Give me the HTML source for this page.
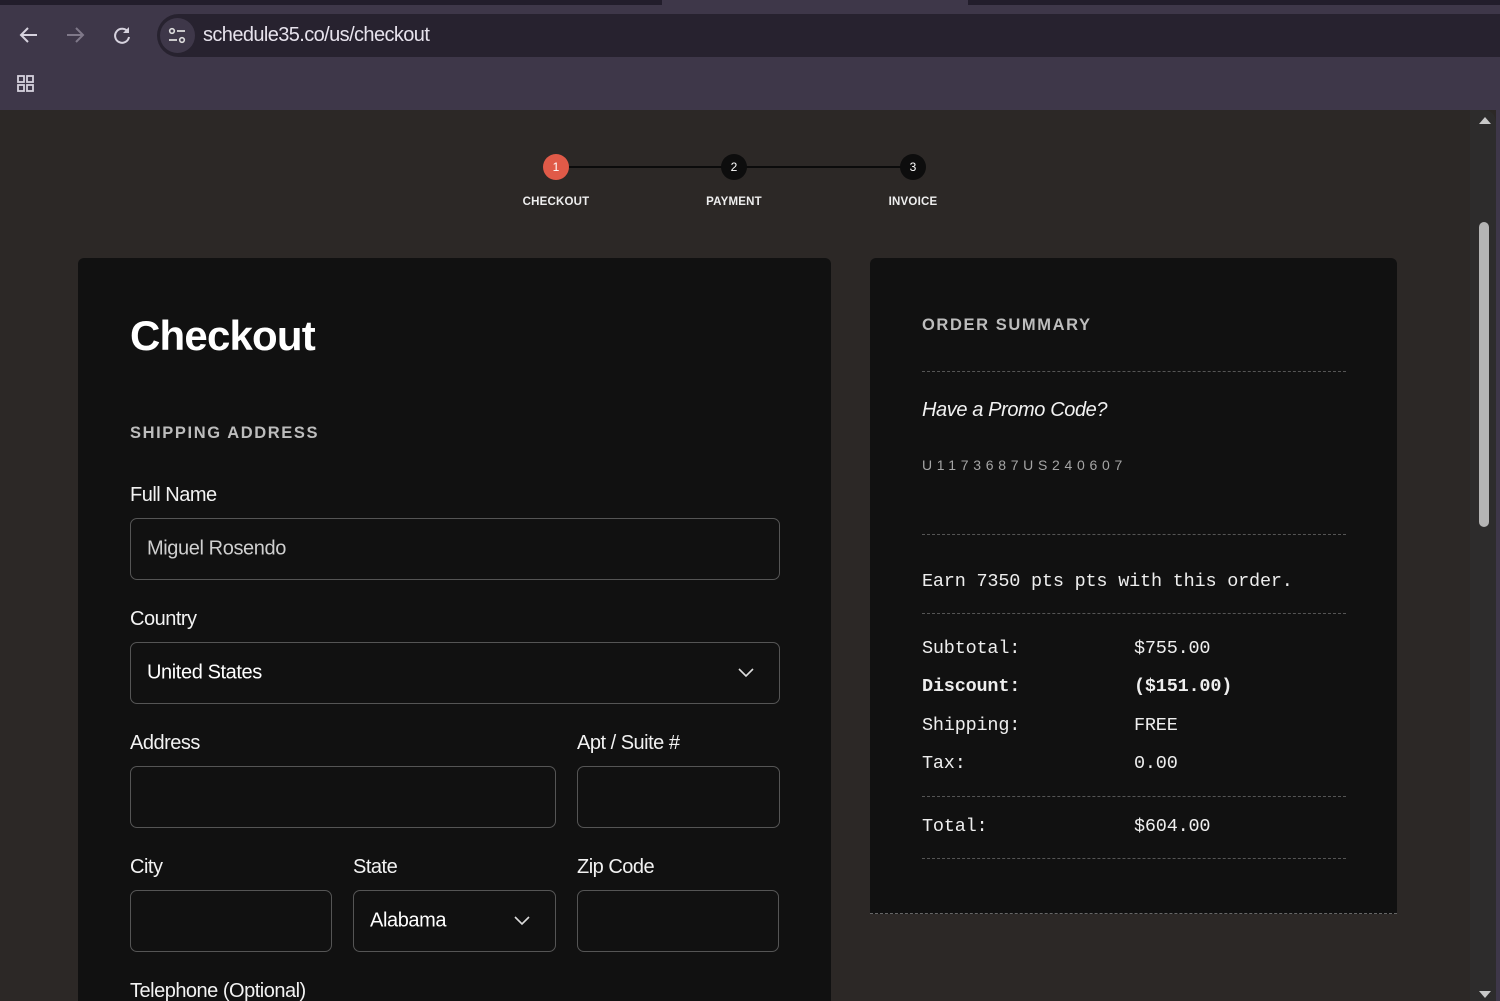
<!DOCTYPE html>
<html><head><meta charset="utf-8">
<style>
*{margin:0;padding:0;box-sizing:border-box}
html,body{width:1500px;height:1001px;overflow:hidden;background:#2c2826;font-family:"Liberation Sans",sans-serif;color:#fff;position:relative}
.abs{position:absolute}
.lbl{position:absolute;font-size:20px;color:#f2f2f2;letter-spacing:-0.5px;line-height:24px}
.inp{position:absolute;border:1.5px solid #555;border-radius:7px;background:#111}
.inp span{position:absolute;left:16px;top:50%;transform:translateY(-50%);font-size:20px;letter-spacing:-0.4px}
.chev{position:absolute;top:50%;transform:translateY(-50%)}
.dash{position:absolute;left:922px;width:424px;border-top:1px dashed #555}
.mono{font-family:"Liberation Mono",monospace;font-size:18.5px;letter-spacing:-0.2px;color:#eee;position:absolute}
</style></head><body>
<div class="abs" style="left:0;top:0;width:1500px;height:110px;background:#3e3749"></div>
<div class="abs" style="left:0;top:0;width:1500px;height:5px;background:#221d2b"></div>
<div class="abs" style="left:662px;top:0;width:306px;height:6px;background:#3e3749"></div>
<div class="abs" style="left:157px;top:14px;width:1343px;height:43px;background:#27222f;border-radius:22px 0 0 22px"></div>
<div class="abs" style="left:160px;top:18px;width:35px;height:35px;background:#3e3749;border-radius:50%"></div>
<svg class="abs" style="left:18px;top:24px" width="22" height="22" viewBox="0 0 22 22"><path d="M19 11H4M10 4L3 11l7 7" stroke="#d6d2de" stroke-width="2" fill="none"/></svg>
<svg class="abs" style="left:64px;top:24px" width="22" height="22" viewBox="0 0 22 22"><path d="M3 11h15M12 4l7 7-7 7" stroke="#7f7889" stroke-width="2" fill="none"/></svg>
<svg class="abs" style="left:111px;top:24px" width="22" height="22" viewBox="0 0 22 22"><path d="M17 8a7 7 0 1 0 1 5" stroke="#d6d2de" stroke-width="2" fill="none"/><path d="M18 3v6h-6z" fill="#d6d2de"/></svg>
<svg class="abs" style="left:167px;top:26px" width="20" height="20" viewBox="0 0 20 20"><circle cx="5" cy="5" r="2.3" stroke="#ddd" stroke-width="1.6" fill="none"/><path d="M10 5h8M2 14h8" stroke="#ddd" stroke-width="1.8"/><circle cx="15" cy="14" r="2.3" stroke="#ddd" stroke-width="1.6" fill="none"/></svg>
<div class="abs" style="left:203px;top:24px;font-size:20px;color:#e6e2ec;letter-spacing:-0.6px">schedule35.co/us/checkout</div>
<svg class="abs" style="left:16px;top:74px" width="20" height="20" viewBox="0 0 20 20"><g stroke="#d6d2de" stroke-width="1.8" fill="none"><rect x="2" y="2" width="6" height="6"/><rect x="11" y="2" width="6" height="6"/><rect x="2" y="11" width="6" height="6"/><rect x="11" y="11" width="6" height="6"/></g></svg>
<div class="abs" style="left:0;top:110px;width:1500px;height:891px;background:#2c2826;border-radius:0 12px 0 0"></div>
<div class="abs" style="left:1470px;top:110px;width:26px;height:891px;background:#2d2c2c;border-radius:0 12px 0 0"></div>
<div class="abs" style="left:1496px;top:110px;width:4px;height:891px;background:#3e3749"></div>
<svg class="abs" style="left:1478px;top:115px" width="14" height="10"><path d="M1 9L7 2l6 7z" fill="#c8c8c8"/></svg>
<div class="abs" style="left:1479px;top:222px;width:10px;height:305px;background:#b4b4b4;border-radius:5px"></div>
<svg class="abs" style="left:1478px;top:990px" width="14" height="9"><path d="M1 1l6 7 6-7z" fill="#c8c8c8"/></svg>
<div class="abs" style="left:556px;top:166px;width:357px;height:2px;background:#0b0b0b"></div>
<div class="abs" style="left:543px;top:154px;width:26px;height:26px;border-radius:50%;background:#e05a48;font-size:12px;line-height:26px;text-align:center;color:#fff">1</div>
<div class="abs" style="left:721px;top:154px;width:26px;height:26px;border-radius:50%;background:#0d0d0d;font-size:12px;line-height:26px;text-align:center;color:#fff">2</div>
<div class="abs" style="left:900px;top:154px;width:26px;height:26px;border-radius:50%;background:#0d0d0d;font-size:12px;line-height:26px;text-align:center;color:#fff">3</div>
<div class="abs" style="left:496px;top:196px;width:120px;text-align:center;font-size:11.5px;font-weight:bold;letter-spacing:.2px;color:#eee">CHECKOUT</div>
<div class="abs" style="left:674px;top:196px;width:120px;text-align:center;font-size:11.5px;font-weight:bold;letter-spacing:.2px;color:#eee">PAYMENT</div>
<div class="abs" style="left:853px;top:196px;width:120px;text-align:center;font-size:11.5px;font-weight:bold;letter-spacing:.2px;color:#eee">INVOICE</div>
<div class="abs" style="left:78px;top:258px;width:753px;height:743px;background:#111;border-radius:6px 6px 0 0"></div>
<div class="abs" style="left:130px;top:312px;font-size:42px;font-weight:bold;letter-spacing:-0.8px">Checkout</div>
<div class="abs" style="left:130px;top:424px;font-size:16.5px;font-weight:bold;letter-spacing:1.6px;color:#bdbdbd">SHIPPING ADDRESS</div>
<div class="lbl" style="left:130px;top:483px">Full Name</div>
<div class="inp" style="left:130px;top:518px;width:650px;height:62px"><span style="color:#cfcfcf">Miguel Rosendo</span></div>
<div class="lbl" style="left:130px;top:607px">Country</div>
<div class="inp" style="left:130px;top:642px;width:650px;height:62px"><span>United States</span><svg class="chev" style="right:24px" width="18" height="12"><path d="M2 2l7 7 7-7" stroke="#ddd" stroke-width="1.6" fill="none"/></svg></div>
<div class="lbl" style="left:130px;top:731px">Address</div>
<div class="lbl" style="left:577px;top:731px">Apt / Suite #</div>
<div class="inp" style="left:130px;top:766px;width:426px;height:62px"></div>
<div class="inp" style="left:577px;top:766px;width:203px;height:62px"></div>
<div class="lbl" style="left:130px;top:855px">City</div>
<div class="lbl" style="left:353px;top:855px">State</div>
<div class="lbl" style="left:577px;top:855px">Zip Code</div>
<div class="inp" style="left:130px;top:890px;width:202px;height:62px"></div>
<div class="inp" style="left:353px;top:890px;width:203px;height:62px"><span>Alabama</span><svg class="chev" style="right:24px" width="18" height="12"><path d="M2 2l7 7 7-7" stroke="#ddd" stroke-width="1.6" fill="none"/></svg></div>
<div class="inp" style="left:577px;top:890px;width:202px;height:62px"></div>
<div class="lbl" style="left:130px;top:979px">Telephone (Optional)</div>
<div class="abs" style="left:870px;top:258px;width:527px;height:656px;background:#111;border-radius:6px 6px 0 0;border-bottom:1px dashed #666"></div>
<div class="abs" style="left:922px;top:316px;font-size:16.5px;font-weight:bold;letter-spacing:1.6px;color:#bdbdbd">ORDER SUMMARY</div>
<div class="dash" style="top:371px"></div>
<div class="abs" style="left:922px;top:399px;font-size:20px;font-style:italic;letter-spacing:-0.4px;color:#f2f2f2">Have a Promo Code?</div>
<div class="abs" style="left:922px;top:457px;font-size:14px;letter-spacing:4.7px;color:#a5a5a5">U1173687US240607</div>
<div class="dash" style="top:534px"></div>
<div class="mono" style="left:922px;top:571px">Earn 7350 pts pts with this order.</div>
<div class="dash" style="top:613px"></div>
<div class="mono" style="left:922px;top:638px">Subtotal:</div><div class="mono" style="left:1134px;top:638px">$755.00</div>
<div class="mono" style="left:922px;top:676px;font-weight:bold">Discount:</div><div class="mono" style="left:1134px;top:676px;font-weight:bold">($151.00)</div>
<div class="mono" style="left:922px;top:715px">Shipping:</div><div class="mono" style="left:1134px;top:715px">FREE</div>
<div class="mono" style="left:922px;top:753px">Tax:</div><div class="mono" style="left:1134px;top:753px">0.00</div>
<div class="dash" style="top:796px"></div>
<div class="mono" style="left:922px;top:816px">Total:</div><div class="mono" style="left:1134px;top:816px">$604.00</div>
<div class="dash" style="top:858px"></div>
</body></html>
